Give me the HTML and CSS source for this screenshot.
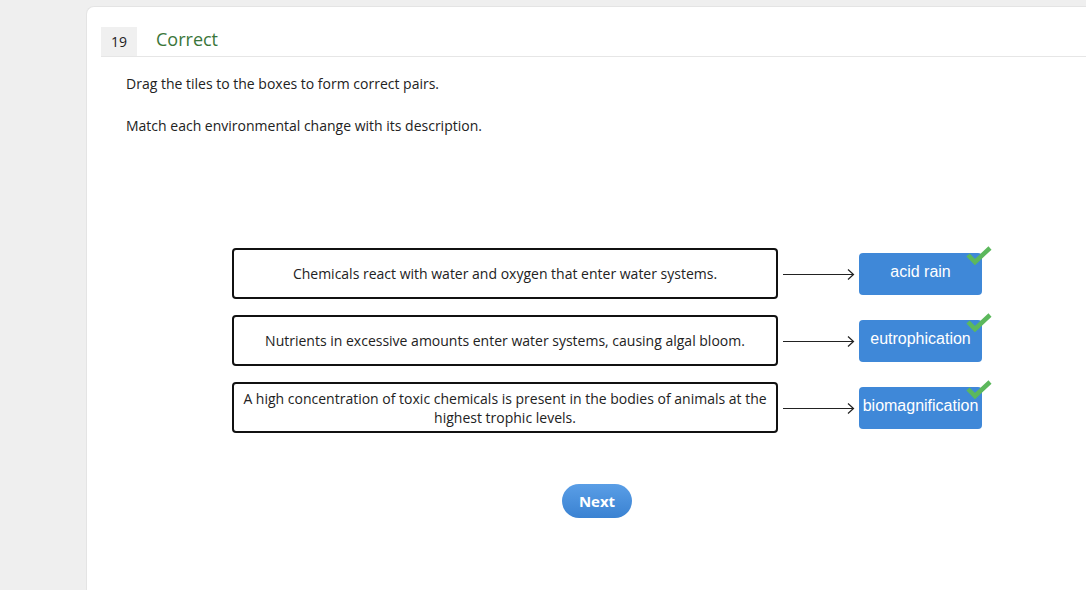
FILE: index.html
```html
<!DOCTYPE html>
<html>
<head>
<meta charset="utf-8">
<link rel="stylesheet" href="styles.css">
</head>
<body>
<div class="card">
  <div class="header">
    <div class="qnum">19</div>
    <div class="status">Correct</div>
  </div>
  <div class="prompt">
    <p>Drag the tiles to the boxes to form correct pairs.</p>
    <p>Match each environmental change with its description.</p>
  </div>
  <div class="pairs">
    <div class="pair">
      <div class="desc">Chemicals react with water and oxygen that enter water systems.</div>
      <svg class="arrow" width="72" height="12" viewBox="0 0 72 12"><path d="M0 6.5H70M65 1.5L70.5 6.5L65 11.5" fill="none" stroke="#222" stroke-width="1.2"/></svg>
      <div class="tile">acid rain<svg class="check" width="28" height="22" viewBox="0 0 28 22"><path d="M3 10L10 17L25 3" fill="none" stroke="#5cb85c" stroke-width="4.5"/></svg></div>
    </div>
    <div class="pair">
      <div class="desc">Nutrients in excessive amounts enter water systems, causing algal bloom.</div>
      <svg class="arrow" width="72" height="12" viewBox="0 0 72 12"><path d="M0 6.5H70M65 1.5L70.5 6.5L65 11.5" fill="none" stroke="#222" stroke-width="1.2"/></svg>
      <div class="tile">eutrophication<svg class="check" width="28" height="22" viewBox="0 0 28 22"><path d="M3 10L10 17L25 3" fill="none" stroke="#5cb85c" stroke-width="4.5"/></svg></div>
    </div>
    <div class="pair">
      <div class="desc">A high concentration of toxic chemicals is present in the bodies of animals at the highest trophic levels.</div>
      <svg class="arrow" width="72" height="12" viewBox="0 0 72 12"><path d="M0 6.5H70M65 1.5L70.5 6.5L65 11.5" fill="none" stroke="#222" stroke-width="1.2"/></svg>
      <div class="tile">biomagnification<svg class="check" width="28" height="22" viewBox="0 0 28 22"><path d="M3 10L10 17L25 3" fill="none" stroke="#5cb85c" stroke-width="4.5"/></svg></div>
    </div>
  </div>
  <div class="actions">
    <button class="next">Next</button>
  </div>
</div>
</body>
</html>
```

FILE: styles.css
```css
html, body {
  margin: 0;
  padding: 0;
  background: #efefef;
  font-family: "Open Sans", "Liberation Sans", sans-serif;
  color: #222;
  height: 100%;
  overflow: hidden;
}

.card {
  margin: 6px 0 0 86px;
  background: #fff;
  border-top-left-radius: 8px;
  border-left: 1px solid #e4e4e4;
  border-top: 1px solid #e4e4e4;
  min-height: 600px;
  padding: 20px 0 0 14px;
  box-sizing: border-box;
}

.header {
  display: flex;
  align-items: flex-start;
  height: 29px;
  border-bottom: 1px solid #e6e6e6;
}

.qnum {
  width: 36px;
  height: 29px;
  background: #f0f0f0;
  display: flex;
  align-items: center;
  justify-content: center;
  font-size: 14px;
  color: #222;
}

.status {
  margin-left: 19px;
  font-size: 18px;
  color: #3a763a;
  line-height: 25px;
}

.prompt {
  padding-left: 25px;
  font-size: 14px;
}

.prompt p {
  margin: 0;
  line-height: 20px;
}

.prompt p:first-child {
  margin-top: 17px;
}

.prompt p + p {
  margin-top: 22px;
}

.pairs {
  margin-top: 112px;
  margin-left: 131px;
  display: flex;
  flex-direction: column;
  gap: 16px;
}

.pair {
  display: flex;
  align-items: center;
}

.desc {
  width: 546px;
  height: 51px;
  box-sizing: border-box;
  border: 2px solid #111;
  border-radius: 4px;
  display: flex;
  align-items: center;
  justify-content: center;
  text-align: center;
  font-size: 14px;
  line-height: 19px;
  padding: 0 8px;
}

.arrow {
  margin-left: 5px;
  display: block;
}

.tile {
  position: relative;
  margin-left: 4px;
  width: 123px;
  height: 42px;
  box-sizing: border-box;
  padding-bottom: 4px;
  background: #3f88d8;
  border-radius: 4px;
  color: #fff;
  font-family: "Liberation Sans", Arial, sans-serif;
  font-size: 16px;
  display: flex;
  align-items: center;
  justify-content: center;
}

.check {
  position: absolute;
  right: -11px;
  top: -8px;
}

.actions {
  margin-top: 51px;
  margin-left: 461px;
}

.next {
  width: 70px;
  height: 34px;
  border: none;
  border-radius: 17px;
  background: linear-gradient(#5a9ee6, #3a82d2);
  color: #fff;
  font-family: "Open Sans", sans-serif;
  font-weight: bold;
  font-size: 15px;
  padding: 0;
}
```
